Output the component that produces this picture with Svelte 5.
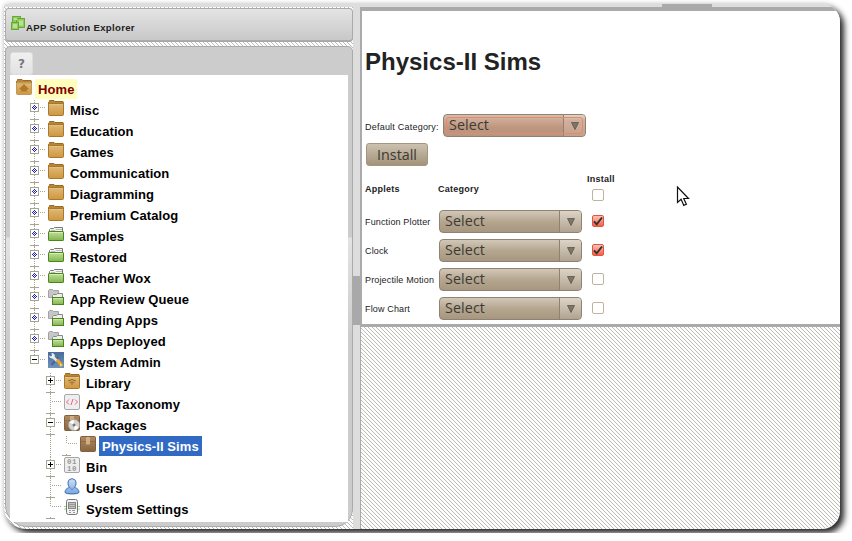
<script>
  const rows = [
    { t: 'Misc', icon: 'folder', lv: 1, ex: '*' },
    { t: 'Education', icon: 'folder', lv: 1, ex: '*' },
    { t: 'Games', icon: 'folder', lv: 1, ex: '*' },
    { t: 'Communication', icon: 'folder', lv: 1, ex: '*' },
    { t: 'Diagramming', icon: 'folder', lv: 1, ex: '*' },
    { t: 'Premium Catalog', icon: 'folder', lv: 1, ex: '*' },
    { t: 'Samples', icon: 'green', lv: 1, ex: '*' },
    { t: 'Restored', icon: 'green', lv: 1, ex: '*' },
    { t: 'Teacher Wox', icon: 'green', lv: 1, ex: '*' },
    { t: 'App Review Queue', icon: 'queue', lv: 1, ex: '*' },
    { t: 'Pending Apps', icon: 'queue', lv: 1, ex: '*' },
    { t: 'Apps Deployed', icon: 'queue', lv: 1, ex: '*' },
    { t: 'System Admin', icon: 'tools', lv: 1, ex: '-', last: true },
    { t: 'Library', icon: 'library', lv: 2, ex: '+' },
    { t: 'App Taxonomy', icon: 'code', lv: 2 },
    { t: 'Packages', icon: 'package', lv: 2, ex: '-' },
    { t: 'Physics-II Sims', icon: 'box', lv: 3, last: true, selected: true },
    { t: 'Bin', icon: 'bin', lv: 2, ex: '+' },
    { t: 'Users', icon: 'user', lv: 2 },
    { t: 'System Settings', icon: 'device', lv: 2, last: true }
  ];
  const applets = [
    { name: 'Function Plotter', on: true },
    { name: 'Clock', on: true },
    { name: 'Projectile Motion', on: false },
    { name: 'Flow Chart', on: false }
  ];
</script>

{#snippet icon(kind)}
  <svg class="icon" width="16" height="17" viewBox="0 0 16 17">
    {#if kind === 'folder' || kind === 'home' || kind === 'library'}
      <path d="M.5 4V2.300l1-1V.500h4.500l1 1H15l.500 1V5H.500z" fill="#b98532" stroke="#9b6b22" />
      <rect x=".5" y="3.500" width="15" height="12" rx="1" fill="url(#gold)" stroke={kind === 'home' ? '#c19855' : '#a97829'} />
      <path d="M1.500 4.500h13" stroke={kind === 'home' ? '#d1a663' : '#e3c084'} />
      {#if kind === 'home'}<path d="M8 5 3.500 9.500v1H5v2h6v-2h1.500v-1z" fill="#b07a2b" />{/if}
      {#if kind === 'library'}
        <path d="M4 8Q8 5 12 8M5.700 9.700Q8 8 10.300 9.700" fill="none" stroke="#8e6325" />
        <path d="m6.800 10.500h2.400L8 12z" fill="#8e6325" />
      {/if}
    {:else if kind === 'green'}
      <path d="M1.500 7V3.500l1-1h3l1-1h8V7" fill="#f4f4f4" stroke="#777" />
      <path d="M3 4.500h4l1-1h6" stroke="#bbb" fill="none" />
      <rect x=".5" y="5.500" width="15" height="9" rx=".6" fill="url(#grn)" stroke="#4b861b" />
      <path d="M1.500 6.500h13" stroke="#d7efb3" />
    {:else if kind === 'queue'}
      <path d="M.500 8.500v-7l1-1h3l1 1h5v7z" fill="#c6c6c6" stroke="#a2a2a2" />
      <path d="M4.500 12V6.500l1-1h3l1-1h5V8" fill="#eee" stroke="#888" />
      <rect x="4.500" y="8.500" width="11" height="7" fill="url(#grn)" stroke="#4b861b" />
      <path d="M5.500 9.500h9" stroke="#c9e8a3" />
    {:else if kind === 'tools'}
      <rect width="16" height="16" fill="url(#blu)" />
      <path d="m3.500 13 7-8" stroke="#4d678c" stroke-width="2" />
      <path d="m4 4 5 5" stroke="#e3e6ea" stroke-width="2.500" />
      <path d="M1 3.500 3 4.500 4 3.500 3.500 1q3.500 0 3.300 3.500L4.500 6.500Q1.500 6.500 1 3.500z" fill="#f0f0ee" />
      <path d="m8 8.500 2-1.700 4.800 5.200q.5 3-2.500 2.700z" fill="#eda727" />
      <circle cx="12.800" cy="13" r=".7" fill="#fff" />
    {:else if kind === 'code'}
      <rect x=".5" y=".5" width="15" height="15" rx="1.500" fill="#eee" stroke="#a9a9a9" />
      <path d="M5 5.500 2.500 8 5 10.500M11 5.500 13.500 8 11 10.500M9 5l-2 6" fill="none" stroke="#f05e91" />
    {:else if kind === 'package' || kind === 'box'}
      <rect x=".5" y=".5" width="15" height="15" rx="1" fill="url(#brn)" stroke="#80603e" />
      <path d="M1 5.500h14" stroke="#75512f" opacity=".4" />
      <path d="M6 1h4v8l-1-1-1 1-1-1-1 1z" fill="#cfae80" />
      {#if kind === 'package'}
        <circle cx="10" cy="10" r="5.700" fill="#d3d5d3" stroke="#999" stroke-width=".7" />
        <path d="M10 10 5.500 7.500Q7 5 9.500 5zM10 10l4.500 2q-1 3-4 3z" fill="#fff" />
        <circle cx="10" cy="10" r="1.500" fill="#8c7560" />
      {/if}
    {:else if kind === 'bin'}
      <rect x=".5" y=".5" width="15" height="15" rx="1.500" fill="#eee" stroke="#a5a5a5" />
      <text class="bits" x="3" y="7.200">01</text>
      <text class="bits" x="3" y="14">10</text>
    {:else if kind === 'user'}
      <path d="M1 14.500q0-4 4.500-5Q3.500 7 4 4q.7-3.300 4-3.300T12 4q.5 3-1.500 5.500 4.500 1 4.500 5-1 1.500-7 1.500t-7-1.500z" fill="url(#usr)" stroke="#3f6fae" />
      <path d="M6 9.500 8 12l2-2.500" stroke="#5e8bc4" fill="none" />
    {:else}
      <path d="M0 7.500h3M0 10h3M13 7.500h3M13 10h3" stroke="#9bd177" />
      <rect x="2.500" y=".5" width="11" height="15" rx="2" fill="#f3f3f3" stroke="#777" />
      <rect x="4.500" y="3.500" width="7" height="6" fill="#c2c2c2" stroke="#888" />
      <path d="M5 5.500h6M5 7.500h6M5 11.500h2M8 11.500h3M5 13.500h2M9 13.500h2" stroke="#999" />
    {/if}
  </svg>
{/snippet}

{#snippet branch(r)}
  <svg class="branch" width="18" height="21" viewBox="0 0 18 21">
    <path d={r.last ? 'M4.500 0v8' : 'M4.500 0v21'} class="dots" />
    <path d={r.ex ? 'M10 7.500h6' : 'M6 7.500h9'} class="dots" />
    {#if r.lv > 1 || !r.last}<path d="M0 19.500h9M4.500 18v1" class="tick" />{/if}
    {#if r.ex}
      <rect x=".5" y="3.500" width="8" height="8" fill="#fff" stroke="#a5a591" />
      {#if r.ex === '*'}
        <path d="M4 5h1v1H4zM3 6h1v1H3zM5 6h1v1H5zM2 7h1v1H2zM4 7h1v1H4zM6 7h1v1H6zM3 8h1v1H3zM5 8h1v1H5zM4 9h1v1H4z" fill="#1717cf" />
      {:else}
        <path d={r.ex === '+' ? 'M2 7.500h5M4.500 5v5' : 'M2 7.500h5'} stroke="#000" />
      {/if}
    {/if}
  </svg>
{/snippet}

{#snippet select(active)}
  <div class="select" class:active>
    <span>Select</span>
    <i><svg width="8" height="8" viewBox="0 0 8 8"><path d="M.5 .5h7L4 7.500z" fill="#7d7668" stroke="#5c564b" stroke-width=".8" /></svg></i>
  </div>
{/snippet}

{#snippet check(on)}
  <div class="check" class:on>
    {#if on}<svg width="12" height="12" viewBox="0 0 12 12"><path d="m2 6.300 2.700 3L10 2.500" fill="none" stroke="#333" stroke-width="2" /></svg>{/if}
  </div>
{/snippet}

<svg class="defs" width="0" height="0">
  <defs>
    <linearGradient id="gold" x2="0" y2="1"><stop stop-color="#dfb979" /><stop offset="1" stop-color="#cf9740" /></linearGradient>
    <linearGradient id="grn" x2="0" y2="1"><stop stop-color="#c3dea0" /><stop offset="1" stop-color="#83b64d" /></linearGradient>
    <linearGradient id="blu" x2="0" y2="1"><stop stop-color="#4a6b9c" /><stop offset="1" stop-color="#6e92bd" /></linearGradient>
    <linearGradient id="brn" x2="0" y2="1"><stop stop-color="#b08a61" /><stop offset="1" stop-color="#886440" /></linearGradient>
    <linearGradient id="usr" x2="0" y2="1"><stop stop-color="#d0e1f5" /><stop offset="1" stop-color="#77a5df" /></linearGradient>
  </defs>
</svg>

<div class="window">
  <div class="topbar"><b></b></div>
  <div class="body">
    <aside>
      <header>
        <svg width="16" height="16" viewBox="0 0 16 16">
          <g fill="#8fca5c" stroke="#68a83a">
            <rect x="1.500" y=".5" width="8" height="9" /><rect x="5.500" y="2.500" width="8" height="9" />
            <rect x=".5" y="6.500" width="7" height="7" />
          </g>
          <path d="M2 8h4v4H2zM8 4.500h4v5H8zM3 2h3v2H3z" fill="#b9e393" />
        </svg>
        <span>APP Solution Explorer</span>
      </header>
      <section>
        <button class="help">?</button>
        <div class="tree">
          <div class="row home">{@render icon('home')}<span class="label">Home</span></div>
          {#each rows as r}
            <div class="row">
              {#if r.lv > 1}<div class="indent"></div>{/if}
              {#if r.lv > 2}
                <div class="indent"><svg width="16" height="21"><path d="M4.500 0v21" class="dots" /></svg></div>
              {/if}
              {@render branch(r)}
              {@render icon(r.icon)}
              <span class="label" class:selected={r.selected}>{r.t}</span>
            </div>
          {/each}
        </div>
      </section>
    </aside>
    <div class="splitter"><b></b></div>
    <main>
      <div class="content">
        <h1>Physics-II Sims</h1>
        <div class="default"><span>Default Category:</span>{@render select(true)}</div>
        <button class="install">Install</button>
        <div class="grid head">
          <b>Applets</b><b>Category</b>
          <div class="inst"><b>Install</b>{@render check(false)}</div>
        </div>
        {#each applets as a}
          <div class="grid">
            <span>{a.name}</span>{@render select(false)}{@render check(a.on)}
          </div>
        {/each}
      </div>
    </main>
  </div>
</div>
<svg class="cursor" width="14" height="21" viewBox="0 0 14 21"><path d="M1.500 1v15.500l3.600-3.300 2.700 6.200 2.600-1.200-2.700-5.700h4.800z" fill="#fff" stroke="#111" stroke-width="1.200" /></svg>

<style>
  :global(body) { margin: 0; background: #fff; overflow: hidden; }
  * { box-sizing: border-box; }
  .defs { position: absolute; }
  .window {
    margin: 4px; width: 836px; height: 525px; overflow: hidden;
    display: flex; flex-direction: column;
    border-radius: 2px 18px 18px 22px;
    background: #fdfdfc;
    box-shadow: 4px 4px 6px rgba(0, 0, 0, .85), 0 0 6px rgba(0, 0, 0, .15);
    font-family: "Liberation Sans", Arial, sans-serif; color: #222;
  }
  .topbar { height: 3px; background: #ddd; flex: none; padding-left: 658px; }
  .topbar b { display: block; width: 50px; height: 3px; background: #aaa; }
  .body {
    flex: 1; display: flex; min-height: 0;
    background-image: url("data:image/svg+xml,%3Csvg xmlns='http://www.w3.org/2000/svg' width='4' height='4'%3E%3Cpath fill='%23bbb' d='M0 0h1v1H0zM1 1h1v1H1zM2 2h1v1H2zM3 3h1v1H3z'/%3E%3C/svg%3E");
  }
  aside { width: 349px; padding: 1px 0 2px 1px; display: flex; flex-direction: column; gap: 4px; }
  header {
    height: 34px; flex: none; border: 1px solid #aaa; border-width: 1px 1px 2px; border-radius: 4px;
    background: linear-gradient(#e4e4e4, #c8c8c8);
    display: flex; padding: 7px 0 0 5px; font: bold 9.6px/24px "Liberation Sans", Arial, sans-serif; color: #222;
  }
  header span { letter-spacing: .32px; margin-left: -1px; }
  section {
    flex: 1; border: 1px solid #aaa; border-radius: 5px 5px 18px 22px; padding: 5px 4px 4px;
    background: linear-gradient(#ccc 190px, #e3e3e3 191px, #ccc 290px);
  }
  .help {
    display: block; width: 23px; height: 23px; margin: 0; padding: 0;
    border: 1px solid #ddd; border-radius: 3px; background: linear-gradient(#f0f0f0, #e2e2e2);
    font: bold 12px/20px "DejaVu Sans", sans-serif; color: #777;
  }
  .tree { height: 447px; background: #fff; padding: 4px 0 0 20px; border-bottom-left-radius: 3px; }
  .row { height: 21px; display: flex; align-items: flex-start; }
  .row.home { margin-left: -14px; }
  .indent { width: 16px; height: 21px; }
  .icon, .branch, .indent svg { display: block; flex: none; }
  .dots { stroke: #a5a591; stroke-dasharray: 1 1; fill: none; }
  .tick { stroke: #a5a591; fill: none; }
  .label { margin-left: 3px; padding: 0 3px; height: 20px; font: bold 13px/21px "Liberation Sans", Arial, sans-serif; color: #000; letter-spacing: .09px; white-space: nowrap; }
  .home .label { background: #ffb; color: #800000; }
  .label.selected { background: #316ac5; color: #fff; }
  .bits { font: bold 7.5px "Liberation Mono", monospace; fill: #999; letter-spacing: .4px; }
  .splitter { width: 7px; background: #ddd; padding-top: 269px; }
  .splitter b { display: block; height: 49px; background: #a9a9a9; }
  main { flex: 1; border-left: 1px solid #aaa; }
  .content { height: 320px; background: #fff; border: solid #aaa; border-width: 4px 0 3px 1px; padding: 36px 0 0 3px; font-size: 9px; }
  h1 { margin: 0; font-size: 24px; line-height: 29px; height: 67px; }
  .default { display: flex; align-items: center; height: 23px; }
  .default > span { width: 78px; padding-top: 2px; letter-spacing: .22px; white-space: nowrap; }
  .select {
    width: 143px; height: 23px; display: flex; border: 1px solid #8f8270; border-radius: 4px; overflow: hidden;
    background: linear-gradient(#d2c7b8, #b5a690 50%, #a79780);
    font: 14.3px/20px "Open Sans", "Noto Sans", sans-serif; color: #3c3a36;
  }
  .select span { flex: 1; padding-left: 5px; letter-spacing: .1px; }
  .select i { width: 22px; padding-left: 1px; border-left: 1px solid #8f8270; background: linear-gradient(#ddd4c7, #b1a390); display: flex; align-items: center; justify-content: center; }
  .active { position: relative; background: linear-gradient(#d3c0ae, #d0aa96 22%, #bd967f 60%, #b69682); }
  .active i { background: linear-gradient(#ded5c7, #d2b09c 25%, #c3a18b); }
  .active::after { content: ""; position: absolute; inset: 2px; border: 1px solid #e48a72; border-radius: 3px; }
  .install {
    display: block; margin: 6px 0 0 1px; width: 62px; height: 23px; padding: 0; border: 1px solid #a39580; border-radius: 3px;
    background: linear-gradient(#ccc1b0, #a39379); font: 14.3px/20px "Open Sans", "Noto Sans", sans-serif; color: #3c3a36;
  }
  .grid { display: grid; grid-template-columns: 74px 148px 40px; align-items: center; height: 29px; }
  .grid > span { padding-top: 1px; white-space: nowrap; letter-spacing: .15px; }
  .grid > .check { margin-top: -2px; }
  .head { height: 41px; padding-top: 4px; }
  .head > b { margin-left: -1px; }
  .head > b:first-child { margin-left: 0; }
  .head b { letter-spacing: .25px; }
  .inst b { display: block; line-height: 12px; margin: -4px 0 4px; }
  .check { width: 12px; height: 12px; margin-left: 5px; border: 1px solid #c0b29c; border-radius: 2px; background: #fff; }
  .check.on { border-color: #dc5743; background: linear-gradient(#ffc2b4, #f85d43); }
  .check svg { display: block; margin: -1px; }
  .cursor { position: absolute; left: 676px; top: 186px; }
</style>
